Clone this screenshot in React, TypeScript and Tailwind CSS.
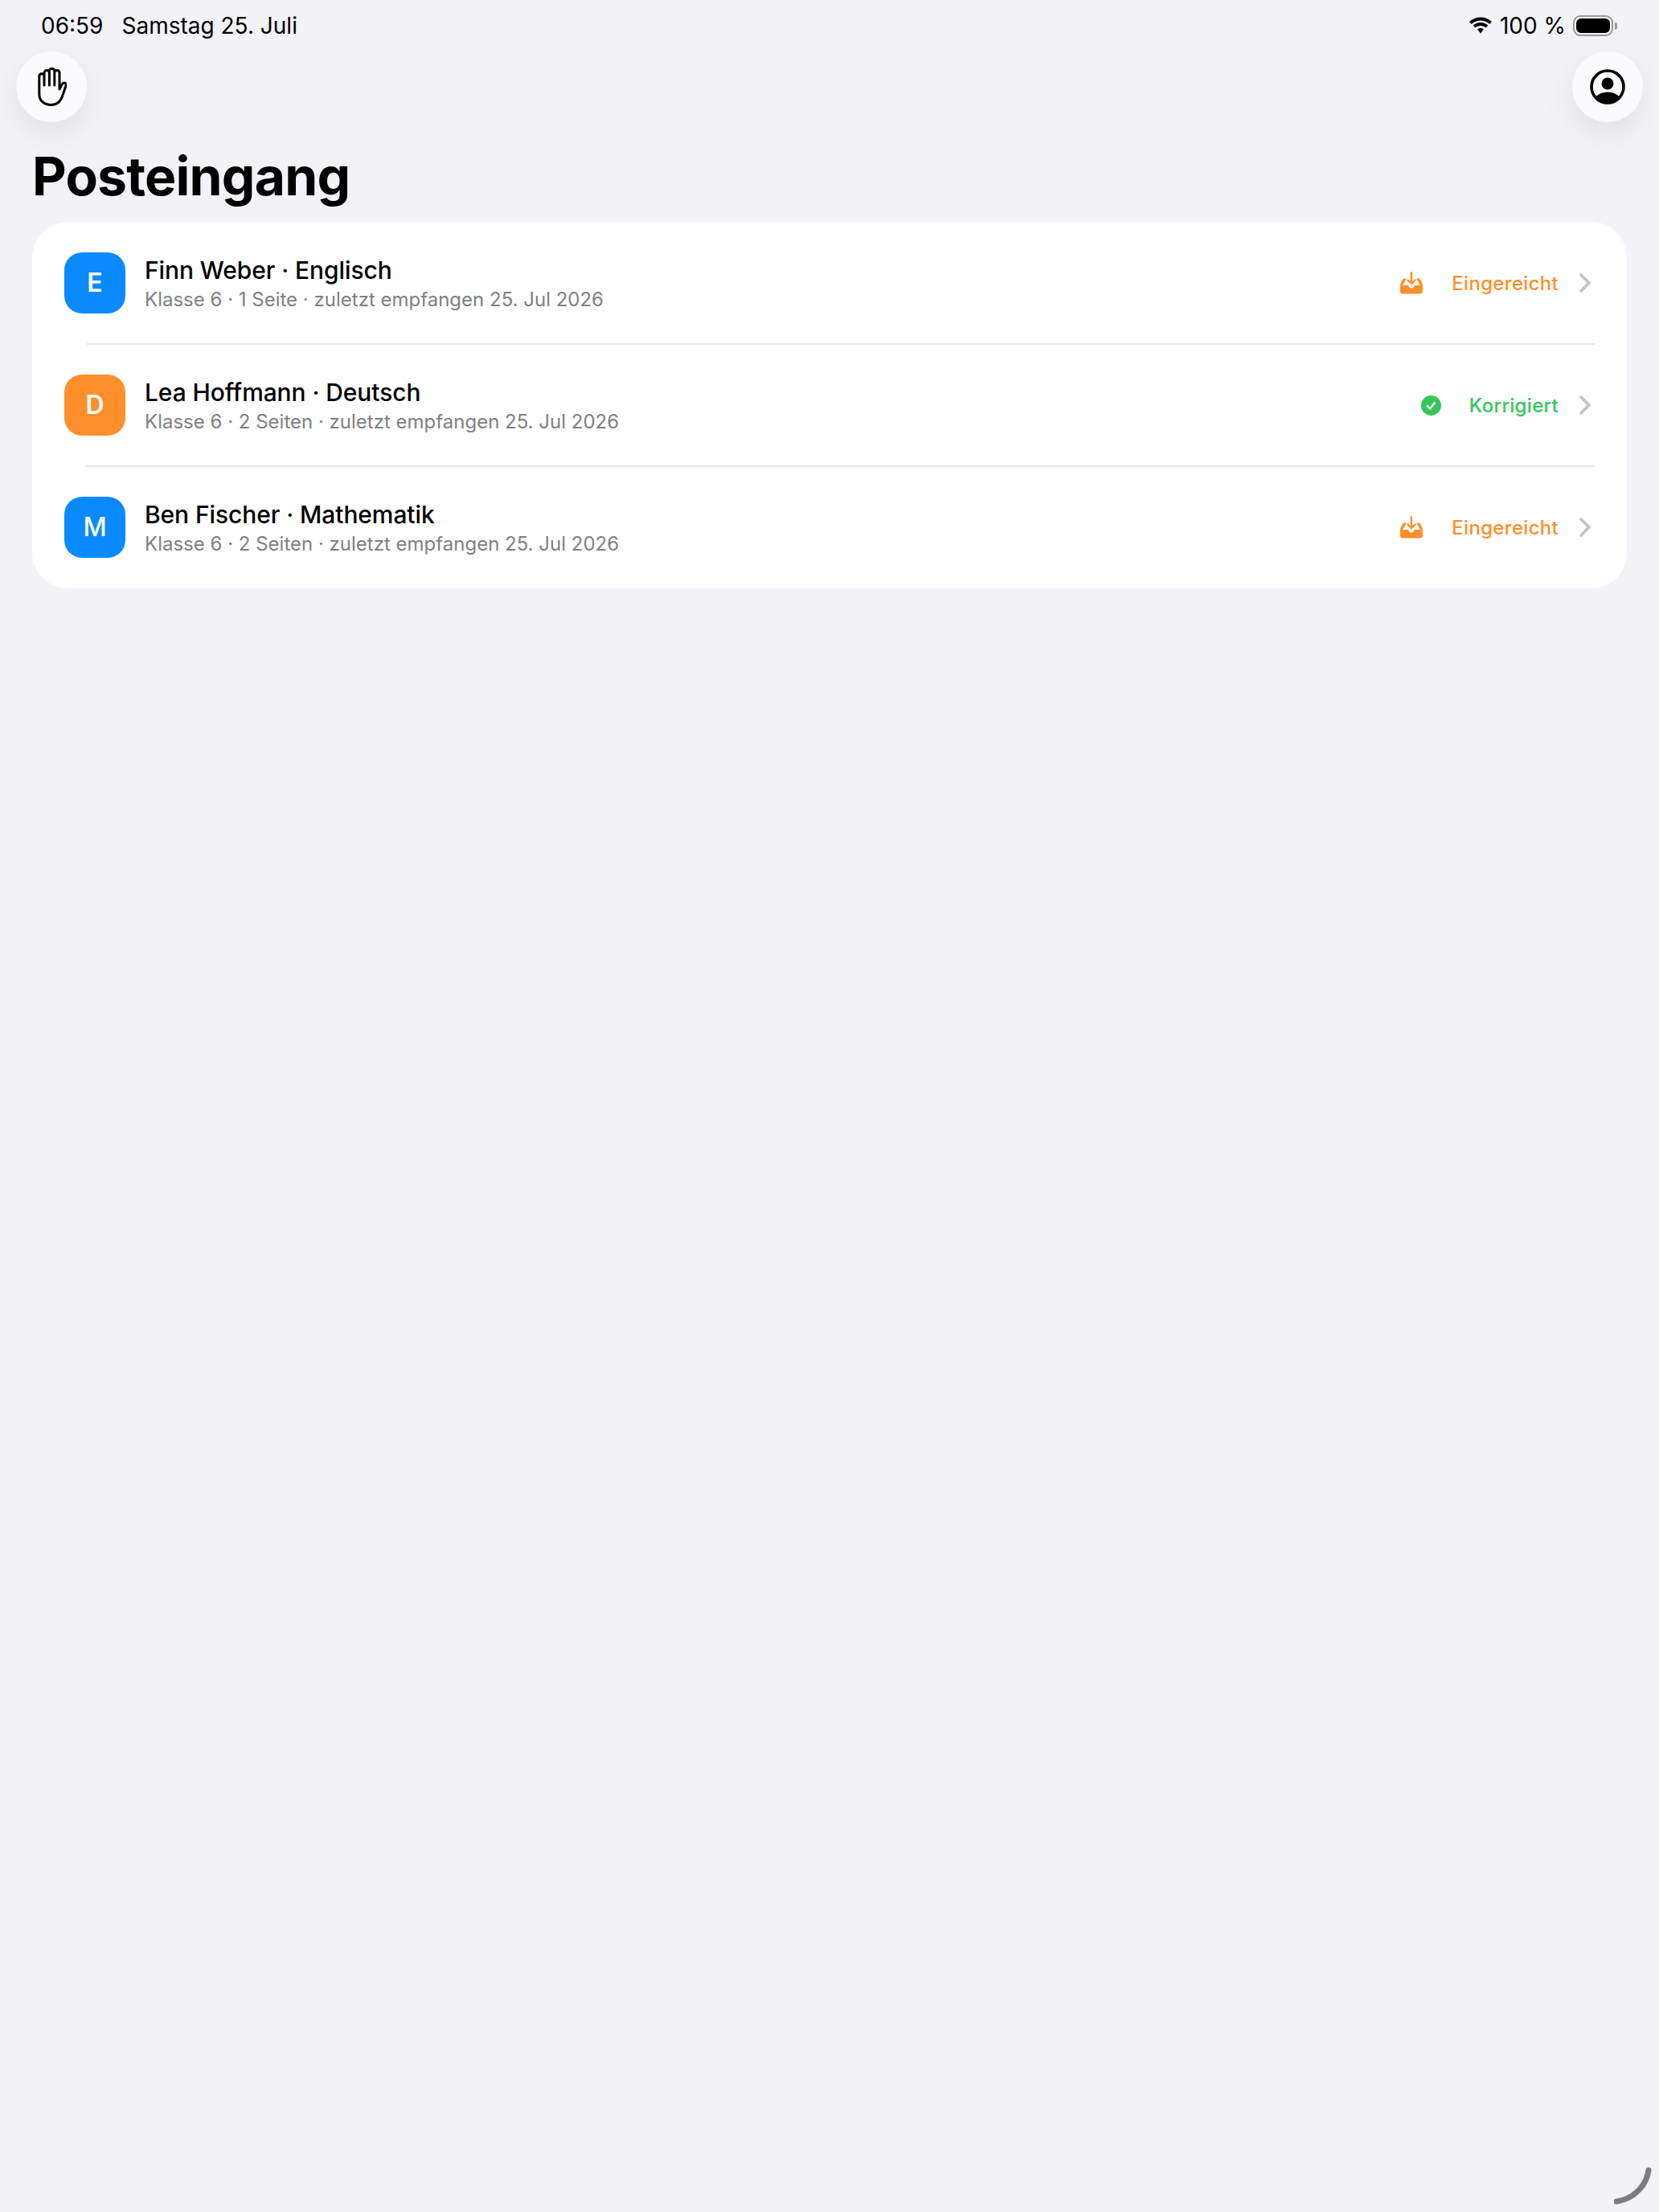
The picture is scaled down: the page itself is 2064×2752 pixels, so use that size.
import React from "react";

const sans = "font-['Inter','Noto_Sans',sans-serif]";

const HandIcon = () => (
  <svg viewBox="0 0 36 48" className="w-9 h-12 translate-x-px" fill="none" stroke="#000" strokeWidth="3" strokeLinecap="round" strokeLinejoin="round">
    <path d="M8 22V7C8 4.900 9.300 3.600 11.200 3.600s3.200 1.300 3.200 3.400M14.400 22V4.400C14.400 2.400 15.700 1.400 17.600 1.400s3.200 1 3.200 3V22M20.800 22V6.400C20.800 4.500 22.100 3.400 23.900 3.400S27 4.500 27 6.400V27l3-5.600c1-1.900 2.600-2.800 4-2.100 1.300.7 1.500 2.100.9 3.700L31 34.500C28.500 42.400 24 46.400 17 46.400 8 46.400 1.800 41.500 1.800 33V11C1.800 9 3.100 7.800 5 7.800S8 9 8 11" />
  </svg>
);

const ProfileIcon = () => (
  <svg viewBox="0 0 44 44" className="w-11 h-11">
    <circle cx="22" cy="22" r="20" fill="none" stroke="#000" strokeWidth="3.600" />
    <circle cx="22" cy="18" r="7.500" fill="#000" />
    <path d="M7 34.500C11 30.500 16 28.500 22 28.500S33 30.500 37 34.500C33 39 28 41 22 41S11 39 7 34.500Z" fill="#000" />
  </svg>
);

const WifiIcon = () => (
  <svg viewBox="0 0 30 22" className="w-[30px] h-[22px]" fill="#000">
    <path d="M15 4.600c4.300 0 8.200 1.600 11.200 4.300l2.800-3C25.200 2.400 20.300.400 15 .400S4.800 2.400 1 5.900l2.800 3C6.800 6.200 10.700 4.600 15 4.600Z" />
    <path d="M15 11c2.500 0 4.800.9 6.600 2.500l2.700-2.900C21.800 8.300 18.500 7 15 7s-6.800 1.300-9.300 3.600l2.700 2.900C10.200 11.900 12.500 11 15 11Z" />
    <path d="M15 14c-1.500 0-2.900.6-3.900 1.500L15 20.500l3.900-5C17.900 14.600 16.500 14 15 14Z" />
  </svg>
);

const BatteryIcon = () => (
  <div className="flex items-center gap-[2px]">
    <div className="w-[50px] h-[26px] rounded-[9px] border-2 border-[#9a9a9c] p-[2px]">
      <div className="w-full h-full rounded-[6px] bg-black" />
    </div>
    <div className="w-[3px] h-[9px] rounded-r-full bg-[#9a9a9c]" />
  </div>
);

const InboxIcon = () => (
  <svg viewBox="0 0 28 28" className="w-7 h-7">
    <path d="M6 8.500H22C23.500 8.500 24.500 9 25.300 10.300L27.500 15C27.800 15.700 28 16.300 28 17.500V24.500C28 26.500 27 27.500 25 27.500H3C1 27.500 0 26.500 0 24.500V17.500C0 16.300.2 15.700.5 15L2.700 10.300C3.500 9 4.500 8.500 6 8.500Z" fill="#ff8f2b" />
    <path d="M6.500 11H21.500L25 17H18.800C18 17 17.700 17.500 17.400 18.200 16.800 19.700 15.500 20.500 14 20.500S11.200 19.700 10.600 18.200C10.300 17.500 10 17 9.200 17H3L6.500 11Z" fill="#fff" />
    <path d="M14 1V15M9.500 10.500 14 15l4.500-4.500" fill="none" stroke="#fff" strokeWidth="5" strokeLinecap="round" strokeLinejoin="round" />
    <path d="M14 1.200V15M9.500 10.500 14 15l4.500-4.500" fill="none" stroke="#ff8f2b" strokeWidth="2.400" strokeLinecap="round" strokeLinejoin="round" />
  </svg>
);

const CheckIcon = () => (
  <svg viewBox="0 0 25 25" className="w-[25px] h-[25px]">
    <circle cx="12.500" cy="12.500" r="12.500" fill="#34c759" />
    <path d="M7.800 13l3.200 3.500 6-7.500" fill="none" stroke="#fff" strokeWidth="2.400" strokeLinecap="round" strokeLinejoin="round" />
  </svg>
);

const Chevron = () => (
  <svg viewBox="0 0 14 24" className="ml-[26px] w-[14px] h-6" fill="none" stroke="#c4c4c7" strokeWidth="3.800" strokeLinecap="round" strokeLinejoin="round">
    <path d="M2 2l10 10L2 22" />
  </svg>
);

const rows = [
  { letter: "E", tile: "bg-[#0a8aff]", weight: "font-semibold", name: "Finn Weber · Englisch", meta: "Klasse 6 · 1 Seite · zuletzt empfangen 25. Jul 2026", status: "Eingereicht", done: false },
  { letter: "D", tile: "bg-[#ff8f2b]", weight: "font-semibold", name: "Lea Hoffmann · Deutsch", meta: "Klasse 6 · 2 Seiten · zuletzt empfangen 25. Jul 2026", status: "Korrigiert", done: true },
  { letter: "M", tile: "bg-[#0a8aff]", weight: "font-medium", name: "Ben Fischer · Mathematik", meta: "Klasse 6 · 2 Seiten · zuletzt empfangen 25. Jul 2026", status: "Eingereicht", done: false },
];

export default function App() {
  return (
    <div className={`${sans} relative w-full min-h-screen bg-[#f2f2f7] text-black`}>
      {/* Status bar */}
      <div className="flex items-center justify-between h-[36px] pt-[14px] pl-[51px] pr-[52px] box-content">
        <div className="flex items-center gap-[23px] text-[28px] leading-8">
          <span>06:59</span>
          <span>Samstag 25. Juli</span>
        </div>
        <div className="flex items-center gap-[9px] text-[28px] leading-8">
          <WifiIcon />
          <span>100 %</span>
          <BatteryIcon />
        </div>
      </div>

      {/* Round toolbar buttons */}
      <div className="flex justify-between px-5 mt-[14px]">
        <button className="flex items-center justify-center w-[88px] h-[88px] rounded-full bg-[#fafaff] shadow-[0_14px_44px_rgba(0,0,0,0.08)]">
          <HandIcon />
        </button>
        <button className="flex items-center justify-center w-[88px] h-[88px] rounded-full bg-[#fafaff] shadow-[0_14px_44px_rgba(0,0,0,0.08)]">
          <ProfileIcon />
        </button>
      </div>

      <h1 className="mt-[27px] pl-10 text-[66px] leading-[80px] font-bold tracking-[-0.8px]">Posteingang</h1>

      {/* Inbox list */}
      <div className="mx-10 mt-[17px] py-px rounded-[44px] bg-white">
        {rows.map((row, i) => (
          <div key={row.name}>
            <div className="flex items-center h-[150px] pl-10 pr-[45px]">
              <div className={`${row.tile} ${row.weight} flex items-center justify-center w-[76px] h-[76px] rounded-[22px] text-white text-[32px]`}>
                {row.letter}
              </div>
              <div className="ml-6 flex-1 pt-px">
                <div className="text-[30px] leading-[38px] font-medium tracking-[-0.1px]">{row.name}</div>
                <div className="mt-[2px] text-[24px] leading-[32px] text-[#808084]">{row.meta}</div>
              </div>
              <div className={`flex items-center ${row.done ? "gap-[35px]" : "gap-9"}`}>
                {row.done ? <CheckIcon /> : <InboxIcon />}
                <span className={`pt-[2px] text-[24px] font-medium tracking-[0.3px] ${row.done ? "text-[#34c759]" : "text-[#ff8f2b]"}`}>{row.status}</span>
              </div>
              <Chevron />
            </div>
            {i < rows.length - 1 && (
              <div className={`h-[2px] mr-10 bg-[#e6e6e8] ${i === 0 ? "ml-[68px]" : "ml-[66px]"}`} />
            )}
          </div>
        ))}
      </div>

      {/* Pencil scribble handle */}
      <svg viewBox="0 0 50 50" className="absolute right-[6px] bottom-[6px] w-[50px] h-[50px]" fill="none">
        <path d="M43 4C41 20 28 39 3 43" stroke="#7d7d80" strokeWidth="7" strokeLinecap="round" />
      </svg>
    </div>
  );
}
